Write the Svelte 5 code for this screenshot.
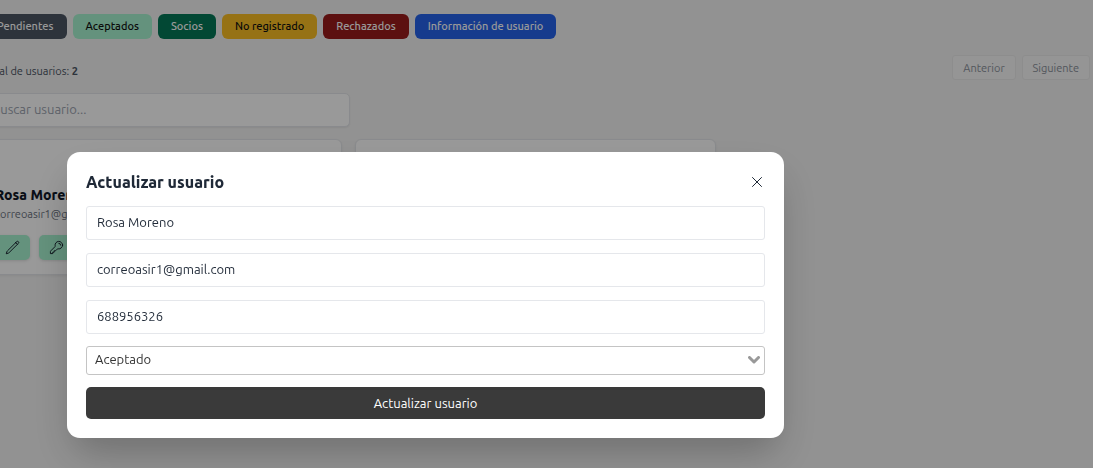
<script>
  const filters = [
    { label: 'Pendientes', tone: 'slate' },
    { label: 'Aceptados', tone: 'mint' },
    { label: 'Socios', tone: 'green' },
    { label: 'No registrado', tone: 'amber' },
    { label: 'Rechazados', tone: 'red' },
    { label: 'Información de usuario', tone: 'blue' }
  ];
  let name = $state('Rosa Moreno');
  let email = $state('correoasir1@gmail.com');
  let phone = $state('688956326');
  let status = $state('Aceptado');
  let search = $state('');
</script>

<div class="page">
  <nav class="filters">
    {#each filters as f}
      <button type="button" class="filter {f.tone}">{f.label}</button>
    {/each}
  </nav>

  <main class="content">
    <div class="summary">
      <p>Total de usuarios: <strong>2</strong></p>
      <div class="pager">
        <button type="button">Anterior</button>
        <button type="button">Siguiente</button>
      </div>
    </div>

    <input class="search" type="search" aria-label="Buscar usuario" placeholder="Buscar usuario..." bind:value={search} />

    <div class="cards">
      <article class="card">
        <h3>Rosa Moreno</h3>
        <p>correoasir1@gmail.com</p>
        <div class="actions">
          <button type="button" aria-label="Editar">
            <svg viewBox="0 0 24 24"><path d="m17.2 4.2 1.5-1.5a1.900 1.900 0 0 1 2.700 2.700L6.600 20.100a4 4 0 0 1-1.700 1L2 22l.9-2.900a4 4 0 0 1 1-1.700L17.200 4.200Zm0 0 2.700 2.700" /></svg>
          </button>
          <button type="button" aria-label="Cambiar clave">
            <svg viewBox="0 0 24 24"><path d="M15.75 5.25a3 3 0 0 1 3 3m3 0a6 6 0 0 1-7.03 5.91c-.56-.1-1.16.03-1.56.43L10.5 17.25H8.25v2.25H6v2.25H2.25v-2.82c0-.6.24-1.17.66-1.59l6.5-6.5c.4-.4.53-1 .43-1.56A6 6 0 1 1 21.75 8.25Z" /></svg>
          </button>
        </div>
      </article>
      <article class="card"></article>
    </div>
  </main>
</div>

<div class="overlay">
  <div class="dialog" role="dialog" aria-modal="true" aria-labelledby="dialog-title">
    <header>
      <h2 id="dialog-title">Actualizar usuario</h2>
      <button type="button" class="close" aria-label="Cerrar">
        <svg viewBox="0 0 10 10"><path d="M.5.5l9 9M9.5.5l-9 9" /></svg>
      </button>
    </header>
    <form onsubmit={(e) => e.preventDefault()}>
      <div class="fields">
        <input type="text" aria-label="Nombre" bind:value={name} />
        <input type="email" aria-label="Correo" bind:value={email} />
        <input type="tel" aria-label="Teléfono" bind:value={phone} />
      </div>
      <div class="select">
        <select aria-label="Estado" bind:value={status}>
          <option>Aceptado</option>
          <option>Pendiente</option>
          <option>Rechazado</option>
        </select>
        <svg viewBox="0 0 12 8"><path d="M1.5 1.5 6 6l4.5-4.5" /></svg>
      </div>
      <button type="submit" class="submit">Actualizar usuario</button>
    </form>
  </div>
</div>

<style>
  :global(body) {
    background: #f4f4f4;
    overflow: hidden;
  }
  :global(#app) {
    font-family: Ubuntu, "Noto Sans", sans-serif;
    color: #1f2937;
  }
  * {
    box-sizing: border-box;
  }
  button,
  input,
  select {
    font: inherit;
    color: inherit;
    margin: 0;
  }
  h2, h3, p {
    margin: 0;
  }
  h2, h3 {
    font-weight: 800;
  }
  svg {
    display: block;
    fill: none;
    stroke: currentColor;
    stroke-linecap: round;
    stroke-linejoin: round;
  }
  .page {
    margin-left: -19px;
    min-height: 100vh;
  }
  .filters {
    display: flex;
    gap: 6px;
    padding: 14px 0 3px 3px;
    background: #f3f3f3;
  }
  .filter {
    height: 25px;
    padding: 0 13px 2px;
    border: 0;
    border-radius: 6px;
    font-size: 11px;
    font-weight: 500;
    line-height: 16px;
    color: #fff;
    white-space: nowrap;
  }
  .slate { background: #4b5563; }
  .mint { background: #a7f3d0; color: #111; }
  .green { background: #047857; }
  .amber { background: #fbbf24; color: #111; }
  .red { background: #991b1b; }
  .blue { background: #2563eb; }
  .summary {
    display: flex;
    justify-content: space-between;
    padding: 13px 3px 13px 0;
    font-size: 11px;
    line-height: 16px;
    color: #4b5563;
  }
  .summary p {
    padding: 8px 0 0 2px;
  }
  .pager {
    display: flex;
    gap: 6px;
  }
  .pager button {
    height: 25px;
    padding: 0 10px;
    border: 1px solid #ececec;
    border-radius: 3px;
    background: #f8f8f8;
    color: #8b919b;
  }
  .search {
    display: block;
    width: 369px;
    height: 34px;
    padding: 0 10px 2px;
    border: 1px solid #e5e7eb;
    border-radius: 5px;
    background: #fff;
    font-size: 13px;
    box-shadow: 0 1px 2px #0001;
  }
  .search::placeholder {
    color: #9ca3af;
    opacity: 1;
  }
  .cards {
    display: grid;
    grid-template-columns: repeat(3, 1fr);
    gap: 13px;
    margin: 12px 3px 0 0;
  }
  .card {
    min-height: 136px;
    padding: 45px 13px 12px;
    border: 1px solid #e5e7eb;
    border-radius: 6px;
    background: #fff;
    box-shadow: 0 1px 3px #0001;
  }
  .card h3 {
    font-size: 14px;
    line-height: 20px;
    color: #111827;
  }
  .card p {
    font-size: 11px;
    line-height: 18px;
    color: #6b7280;
  }
  .actions {
    display: flex;
    gap: 9px;
    margin-top: 12px;
  }
  .actions button {
    padding: 5px 10px;
    border: 0;
    border-radius: 5px;
    background: #a7f3d0;
    color: #111827;
    box-shadow: 0 1px 3px #0002;
  }
  .actions svg {
    width: 15px;
    height: 15px;
    stroke-width: 1.5;
  }
  .overlay {
    position: fixed;
    inset: 0;
    padding: 152px 67px 0;
    background: rgba(0, 0, 0, 0.4);
  }
  .dialog {
    max-width: 717px;
    padding: 19px;
    border-radius: 13px;
    background: #fff;
    box-shadow: 0 20px 40px -6px rgba(0, 0, 0, 0.25);
  }
  .dialog header {
    display: flex;
    align-items: center;
    justify-content: space-between;
    margin-bottom: 13px;
  }
  h2 {
    font-size: 16px;
    line-height: 22px;
  }
  .close {
    padding: 3px;
    border: 0;
    background: none;
  }
  .close svg {
    width: 10px;
    height: 10px;
    stroke-width: 1;
  }
  form {
    display: grid;
    gap: 12px;
    font-size: 13px;
  }
  .fields {
    display: grid;
    gap: 13px;
  }
  .fields input {
    width: 100%;
    height: 34px;
    padding: 0 10px 2px;
    border: 1px solid #e5e7eb;
    border-radius: 3px;
    background: #fff;
  }
  .select {
    display: grid;
    align-items: center;
  }
  .select > * {
    grid-area: 1 / 1;
  }
  select {
    appearance: none;
    width: 100%;
    height: 29px;
    padding: 0 28px 3px 8px;
    border: 1px solid #c4c4c4;
    border-radius: 3px;
    background: #fff;
    color: #333;
  }
  .select svg {
    justify-self: end;
    width: 12px;
    height: 8px;
    margin: 0 5px 2px 0;
    color: #999;
    stroke-width: 3;
    pointer-events: none;
  }
  .submit {
    height: 32px;
    border: 0;
    border-radius: 5px;
    background: #3a3a3a;
    color: #fff;
  }
</style>
